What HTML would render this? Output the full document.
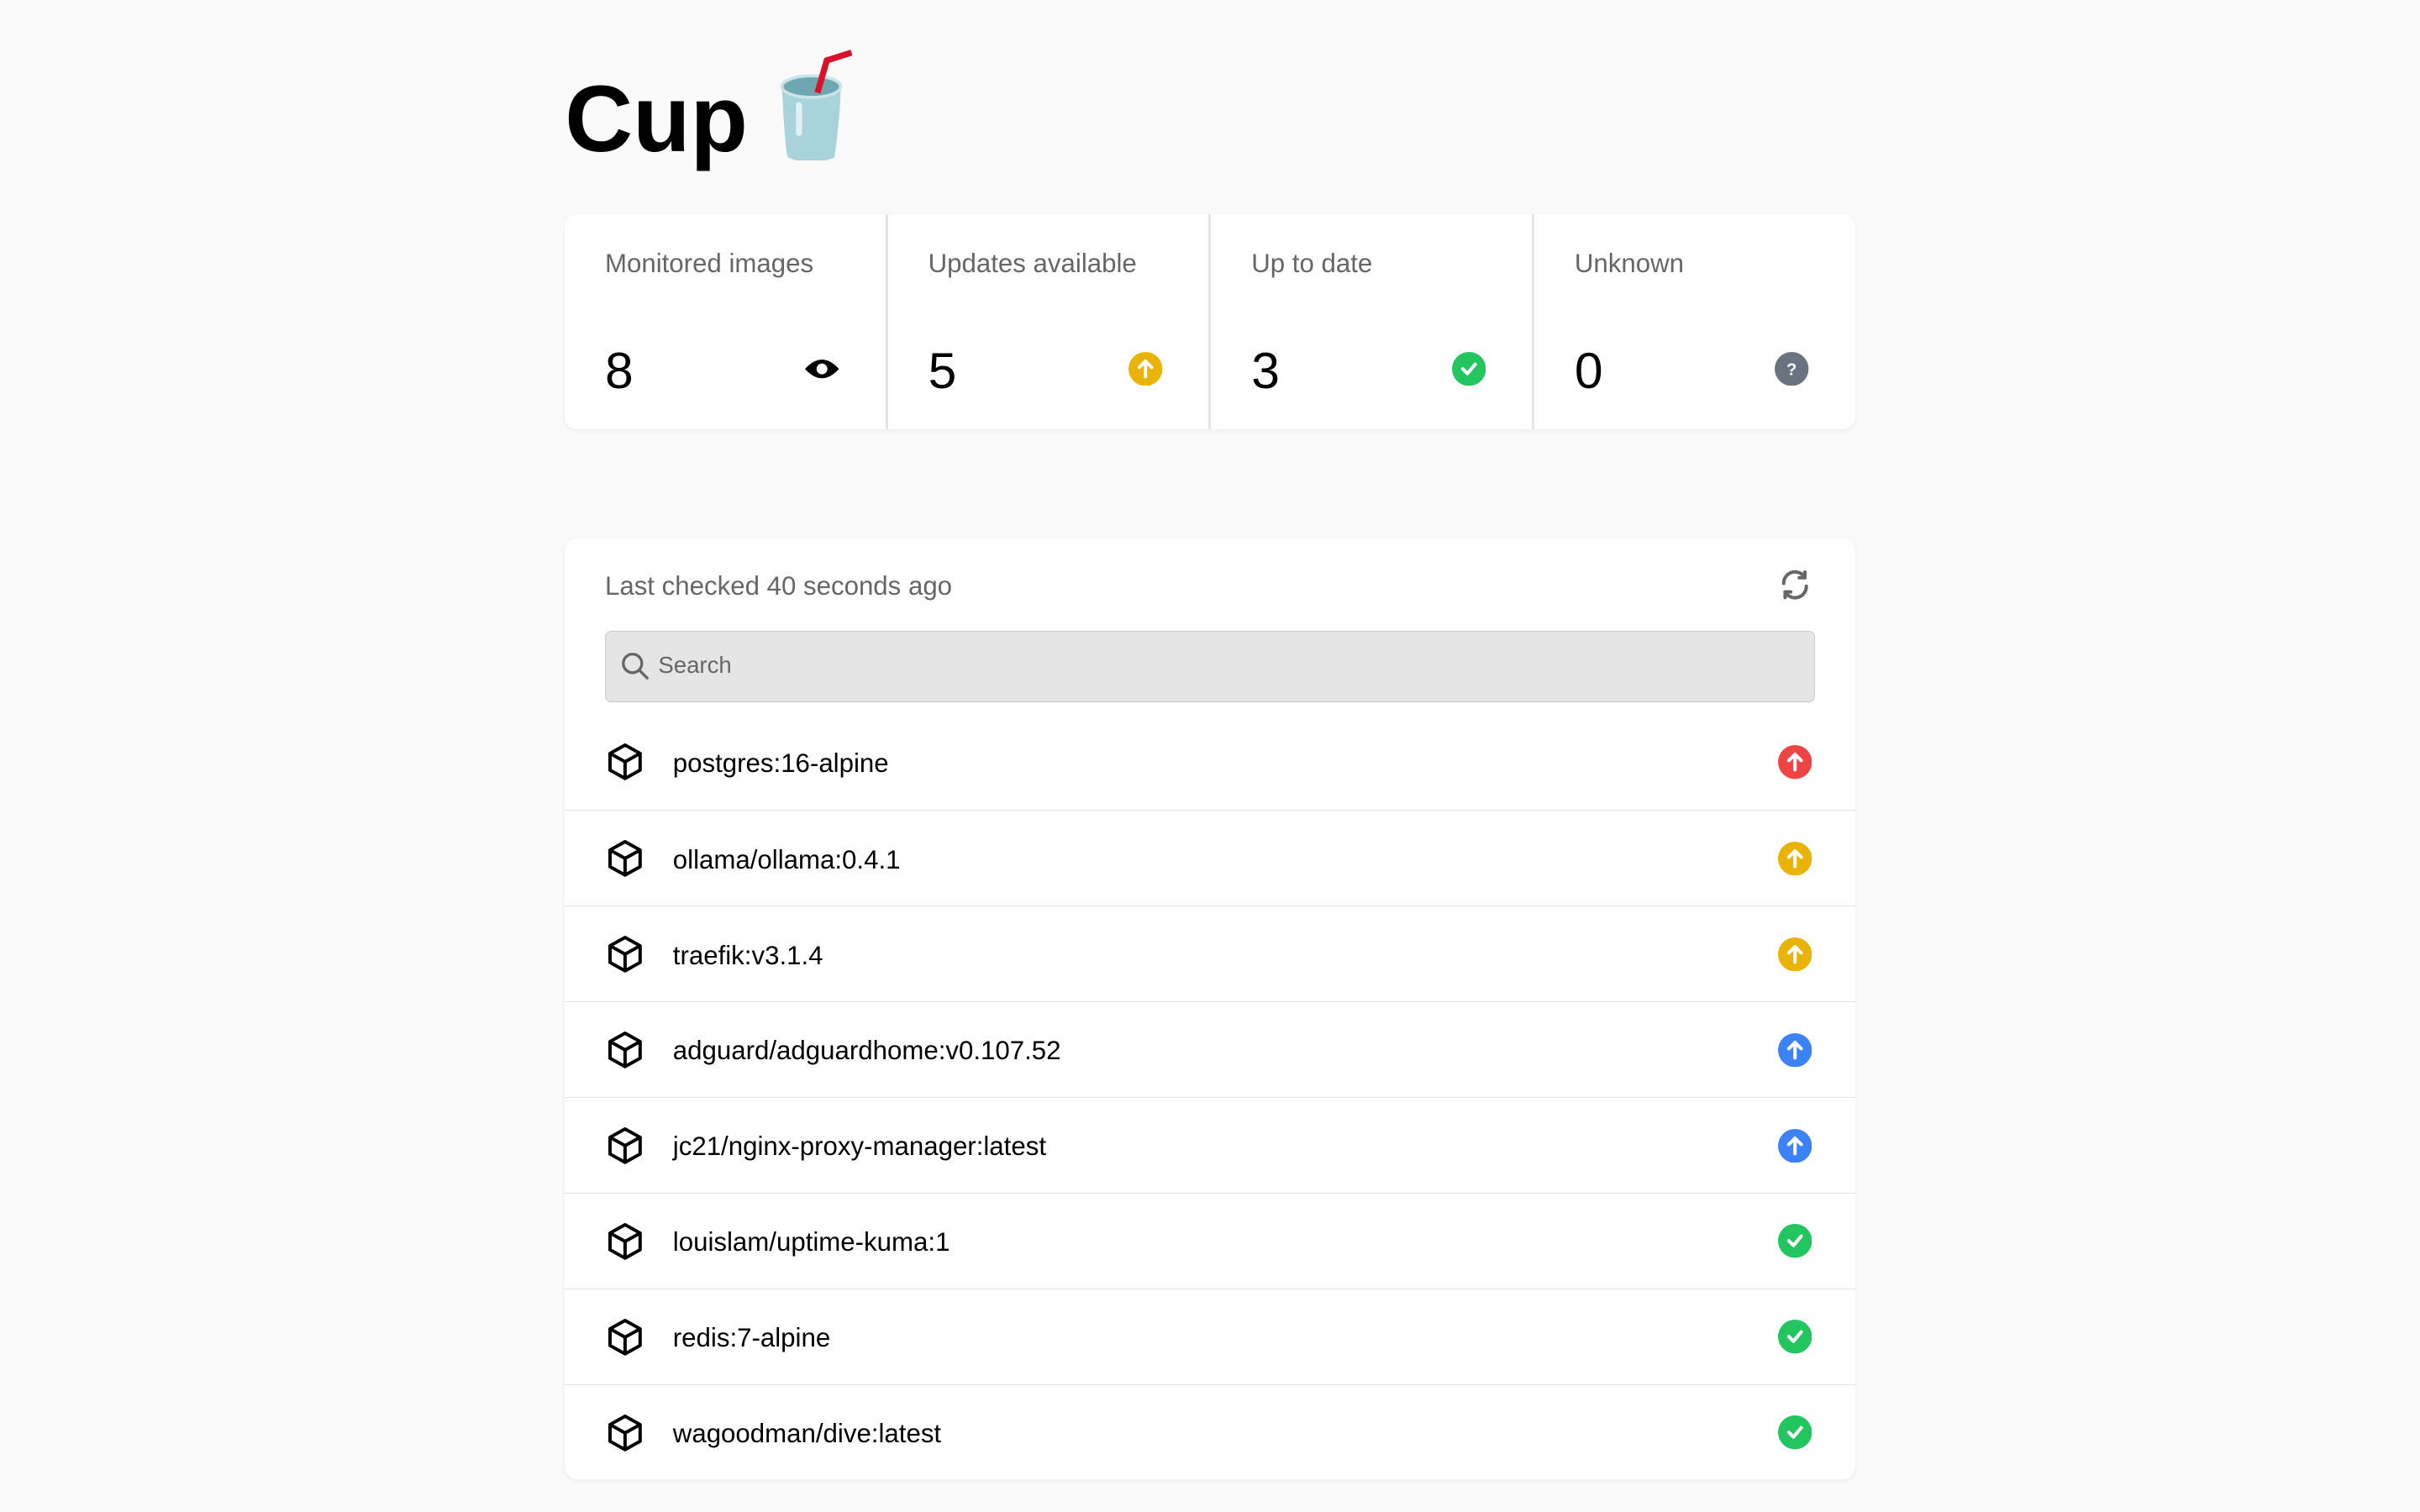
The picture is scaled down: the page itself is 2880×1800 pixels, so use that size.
<!DOCTYPE html>
<html><head><meta charset="utf-8"><style>
html,body{margin:0;padding:0;background:#fafafa;}
body{width:2880px;height:1800px;overflow:hidden;}
#w{zoom:1.8367;width:1568px;height:980px;position:relative;font-family:"Liberation Sans","DejaVu Sans",sans-serif;color:#000;}
h1{position:absolute;left:366px;top:32px;margin:0;font-size:61px;font-weight:bold;line-height:80px;}
.card{position:absolute;left:366px;width:836px;background:#fff;border-radius:8px;box-shadow:0 1px 3px rgba(0,0,0,.06);}
.stats{top:139px;height:139px;display:flex;}
.stat{flex:1;position:relative;border-left:2px solid #e5e5e5;}
.stat:first-child{border-left:none}
.lbl{position:absolute;left:26px;top:22px;font-size:17px;color:#666;}
.num{position:absolute;left:26px;top:82px;font-size:33px;font-weight:300;}
.si{position:absolute;right:30px;top:89px;width:22px;height:22px;}
.list{top:349px;height:610px;}
.hdr{position:absolute;left:26px;top:21px;font-size:17px;color:#666;}
.ref{position:absolute;right:28px;top:19px;}
.search{position:absolute;left:26px;top:60px;width:784px;height:46px;background:#e5e5e5;border:1px solid #ccc;border-radius:4px;box-sizing:border-box;}
.search span{position:absolute;left:34px;top:13px;font-size:15px;color:#666;}
.search svg{position:absolute;left:10px;top:13px;}
.row{position:absolute;left:0;width:836px;height:62px;border-top:1px solid #e4e4e7;box-sizing:border-box;}
.row .t{position:absolute;left:70px;top:22px;font-size:17px;}
.row .b{position:absolute;left:26px;top:18px;}
.row .s{position:absolute;right:28px;top:20px;width:22px;height:22px;}
</style></head><body><div id="w">
<h1>Cup<svg width="52" height="72" viewBox="0 0 52 72" style="vertical-align:-6px;margin-left:20px"><path d="M2 24 Q4 68 6 70 Q20 76 36 70 Q40 40 40 24 Z" fill="#a8d3da"/><ellipse cx="21" cy="24" rx="19" ry="7" fill="#6ea7b1" stroke="#c9e4e8" stroke-width="2"/><rect x="11" y="34" width="4" height="22" rx="2" fill="#e0f0f3"/><path d="M25 28 L31 7 L47 2" fill="none" stroke="#d9112a" stroke-width="4"/></svg></h1>
<div class="card stats">
<div class="stat"><div class="lbl">Monitored images</div><div class="num">8</div><svg class="si" viewBox="0 0 22 22"><path d="M0 11 Q11 -1 22 11 Q11 23 0 11Z" fill="#000"/><circle cx="11" cy="11" r="3.5" fill="#fff"/></svg></div>
<div class="stat"><div class="lbl">Updates available</div><div class="num">5</div><svg class="si" viewBox="0 0 22 22"><circle cx="11" cy="11" r="11" fill="#eab308"/><path d="M11 16V6M7 10l4-4 4 4" stroke="#fff" stroke-width="2.2" fill="none" stroke-linecap="round" stroke-linejoin="round"/></svg></div>
<div class="stat"><div class="lbl">Up to date</div><div class="num">3</div><svg class="si" viewBox="0 0 22 22"><circle cx="11" cy="11" r="11" fill="#22c55e"/><path d="M7 11l3 3 5-6" stroke="#fff" stroke-width="2.2" fill="none" stroke-linecap="round" stroke-linejoin="round"/></svg></div>
<div class="stat"><div class="lbl">Unknown</div><div class="num">0</div><svg class="si" viewBox="0 0 22 22"><circle cx="11" cy="11" r="11" fill="#6b7280"/><text x="11" y="15" text-anchor="middle" font-size="11" font-weight="bold" fill="#fff" font-family="Liberation Sans">?</text></svg></div>
</div>
<div class="card list">
<div class="hdr">Last checked 40 seconds ago</div>
<svg class="ref" width="22" height="22" viewBox="0 0 24 24" fill="none" stroke="#666" stroke-width="2.4" stroke-linecap="round" stroke-linejoin="round"><path d="M4 11A8 8 0 0 1 19 7M20 13A8 8 0 0 1 5 17"/><path d="M19 3v4h-4M5 21v-4h4"/></svg>
<div class="search"><svg width="18" height="18" viewBox="0 0 18 18" fill="none" stroke="#666" stroke-width="1.8"><circle cx="7.5" cy="7.5" r="6"/><path d="M12 12l5 5" stroke-linecap="round"/></svg><span>Search</span></div>
<div id="rows"></div>
</div>
</div>
<script>
var d=[["postgres:16-alpine","#ef4444","u"],["ollama/ollama:0.4.1","#eab308","u"],["traefik:v3.1.4","#eab308","u"],["adguard/adguardhome:v0.107.52","#3b82f6","u"],["jc21/nginx-proxy-manager:latest","#3b82f6","u"],["louislam/uptime-kuma:1","#22c55e","c"],["redis:7-alpine","#22c55e","c"],["wagoodman/dive:latest","#22c55e","c"]];
var h="";d.forEach(function(r,i){var top=114+i*62;var p=r[2]=="u"?'<path d="M11 16V6M7 10l4-4 4 4" stroke="#fff" stroke-width="2.2" fill="none" stroke-linecap="round" stroke-linejoin="round"/>':'<path d="M7 11l3 3 5-6" stroke="#fff" stroke-width="2.2" fill="none" stroke-linecap="round" stroke-linejoin="round"/>';
h+='<div class="row" style="top:'+top+'px;'+(i==0?'border-top:none':'')+'"><svg class="b" width="26" height="26" viewBox="0 0 24 24" fill="none" stroke="#000" stroke-width="2" stroke-linejoin="round"><path d="M12 2l9 5v10l-9 5-9-5V7z"/><path d="M3 7l9 5 9-5M12 12v10"/></svg><div class="t">'+r[0]+'</div><svg class="s" viewBox="0 0 22 22"><circle cx="11" cy="11" r="11" fill="'+r[1]+'"/>'+p+'</svg></div>';});
document.getElementById("rows").innerHTML=h;
</script>
</body></html>
